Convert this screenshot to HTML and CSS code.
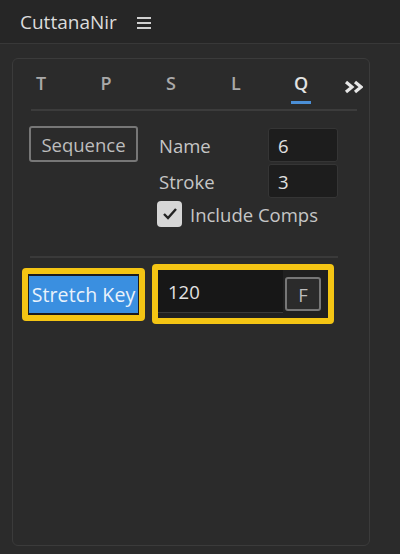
FILE: index.html
```html
<!DOCTYPE html>
<html lang="en">
<head>
  <meta charset="UTF-8" />
  <title>CuttanaNir</title>
  <link rel="stylesheet" href="styles.css">
</head>
<body>

  <div class="header">
    <span class="title">CuttanaNir</span>
    <span class="menu"><i></i><i></i><i></i></span>
  </div>

  <div class="wrap">
    <div class="panel">

      <div class="tabs">
        <div class="tab">T</div>
        <div class="tab">P</div>
        <div class="tab">S</div>
        <div class="tab">L</div>
        <div class="tab active">Q</div>
        <div class="more">
          <svg width="19" height="14" viewBox="0 0 19 14">
            <path d="M2 2 L8 7 L2 12 M11 2 L17 7 L11 12" fill="none" stroke="#e6e6e6" stroke-width="3.2"/>
          </svg>
        </div>
      </div>

      <div class="options">
        <button class="btn seq">Sequence</button>
        <div class="fields">
          <label>Name</label><input class="field" type="text" value="6">
          <label>Stroke</label><input class="field" type="text" value="3">
          <div class="check">
            <span class="box">
              <svg width="16" height="14" viewBox="0 0 16 14">
                <path d="M2 7 L6 11 L14 2" fill="none" stroke="#222" stroke-width="2.4"/>
              </svg>
            </span>
            Include Comps
          </div>
        </div>
      </div>

      <div class="sep"></div>

      <div class="keyrow">
        <div class="hl key"><span class="stretch">Stretch Key</span></div>
        <div class="hl group">
          <input class="amount" type="text" value="120">
          <button class="btn fbtn">F</button>
        </div>
      </div>

    </div>
  </div>

</body>
</html>
```

FILE: styles.css
```css
body {
  margin: 0;
  background-color: #2b2b2b;
  font-family: "Open Sans", "Noto Sans", sans-serif;
  font-size: 18.5px;
  color: #c6c6c6;
}
.header {
  height: 43px;
  display: flex;
  align-items: center;
  padding-left: 20px;
  background-color: #262626;
  border-bottom: 1px solid #383838;
}
.title {
  color: #dcdcdc;
  font-size: 19px;
}
.menu {
  display: flex;
  flex-direction: column;
  gap: 3px;
  margin-left: 20px;
  margin-top: 2px;
}
.menu i {
  display: block;
  width: 14px;
  height: 2px;
  background-color: #d0d0d0;
}
.wrap {
  padding: 14px 30px 8px 12px;
}
.panel {
  height: 486px;
  border: 1px solid #3b3b3b;
  border-radius: 6px;
  background-color: #2b2b2b;
}

/* tabs */
.tabs {
  display: flex;
  gap: 45px;
  margin: 0 12px 0 18px;
  padding-top: 12px;
  padding-bottom: 5px;
  border-bottom: 2px solid #3c3c3c;
}
.tab {
  flex-shrink: 0;
  width: 20px;
  text-align: center;
  line-height: 24px;
  color: #a9a9a9;
  font-size: 18px;
  font-weight: 600;
}
.tab::after {
  content: "";
  display: block;
  height: 3px;
  margin-top: 6px;
}
.tab.active {
  color: #e2e2e2;
}
.tab.active::after {
  background-color: #4b8fd6;
}
.more {
  flex-shrink: 0;
  margin-left: -12px;
  padding-top: 3px;
}

/* options */
.options {
  display: flex;
  padding: 15px 0 0 16px;
  gap: 19px;
}
.btn {
  font-family: inherit;
  font-size: 18.5px;
  color: #bdbdbd;
  background-color: #2b2b2b;
  border: 2px solid #777;
  border-radius: 3px;
  padding: 0;
}
.seq {
  width: 109px;
  height: 36px;
}
.fields {
  display: grid;
  grid-template-columns: 111px 70px;
  row-gap: 2px;
  padding-top: 2px;
  align-items: center;
}
.fields label {
  padding-left: 2px;
}
.field {
  width: 70px;
  height: 34px;
  box-sizing: border-box;
  background-color: #1d1d1d;
  border: 1px solid #353535;
  border-radius: 3px;
  color: #e0e0e0;
  font-family: inherit;
  font-size: 18.5px;
  padding: 0 0 0 9px;
}
.check {
  grid-column: 1 / 3;
  display: flex;
  align-items: center;
  gap: 8px;
  margin-top: 1px;
}
.box {
  width: 25px;
  height: 26px;
  border-radius: 4px;
  background-color: #d6d6d6;
  display: flex;
  align-items: center;
  justify-content: center;
}

.sep {
  width: 308px;
  height: 2px;
  margin: 29px 0 0 17px;
  background-color: #3a3a3a;
}

/* highlighted key row */
.keyrow {
  display: flex;
  align-items: center;
  gap: 7px;
  padding: 6px 0 0 9px;
}
.hl {
  border: 6px solid #f4c514;
  border-radius: 4px;
  background-color: #1b1b1f;
}
.key {
  padding: 2px 1px;
}
.stretch {
  display: block;
  width: 109px;
  height: 37px;
  line-height: 37px;
  text-align: center;
  background-color: #3a8fe0;
  color: #e9f2fb;
  font-size: 19.5px;
  letter-spacing: 0.1px;
}
.group {
  display: flex;
  align-items: center;
  width: 170px;
  height: 48px;
  background-color: #202020;
}
.amount {
  width: 125px;
  height: 43px;
  box-sizing: border-box;
  align-self: flex-start;
  background-color: #171717;
  border: none;
  border-bottom: 1px solid #3a3a3a;
  color: #e2e2e2;
  font-family: inherit;
  font-size: 18.5px;
  padding: 0 0 0 10px;
}
.fbtn {
  width: 36px;
  height: 34px;
  margin-left: 2px;
}
```
